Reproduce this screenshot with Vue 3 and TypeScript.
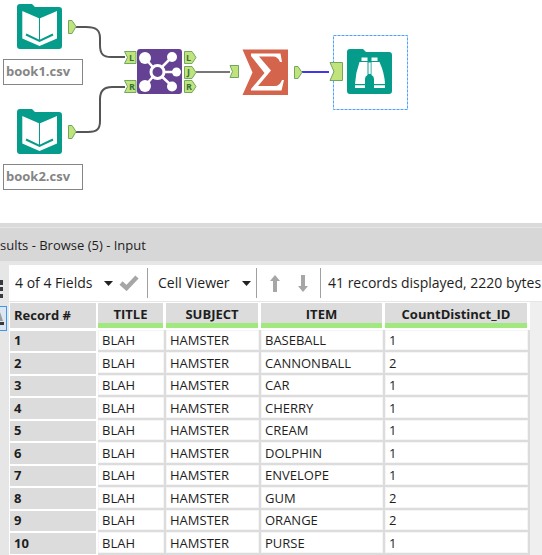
<script setup lang="ts">
import { ref } from 'vue'

interface Row {
  title: string
  subject: string
  item: string
  count: number
}

const columns: string[] = ['TITLE', 'SUBJECT', 'ITEM', 'CountDistinct_ID']

const items: [string, number][] = [
  ['BASEBALL', 1],
  ['CANNONBALL', 2],
  ['CAR', 1],
  ['CHERRY', 1],
  ['CREAM', 1],
  ['DOLPHIN', 1],
  ['ENVELOPE', 1],
  ['GUM', 2],
  ['ORANGE', 2],
  ['PURSE', 1],
]

const rows: Row[] = items.map(([item, count]) => ({
  title: 'BLAH',
  subject: 'HAMSTER',
  item,
  count,
}))

const sources = [
  { id: 'source-a', file: 'book1.csv' },
  { id: 'source-b', file: 'book2.csv' },
]

const fields = ref('4 of 4 Fields')
const viewer = ref('Cell Viewer')
</script>

<template>
  <main class="app">
    <section class="canvas" aria-label="Workflow">
      <svg class="wires" width="542" height="223" aria-hidden="true">
        <path d="M76 27H86C96 27 100 30 100 38V45C100 54 103 57 111 57H125" />
        <path d="M76 132H88C97 132 100 129 100 121V99C100 91 104 87 112 87H125" />
        <path class="joined" d="M196 72H230" />
        <path class="active" d="M302 72H329" />
      </svg>

      <div v-for="s in sources" :key="s.id" class="node source" :class="s.id">
        <svg class="source-icon" width="60" height="46" viewBox="0 0 60 46" aria-hidden="true">
          <path class="teal" d="M3 0H15L18 3H42Q45 3 45 6V42Q45 45 42 45H3Q0 45 0 42V3Q0 0 3 0Z" />
          <path fill="#fff" d="M5.300 7L22.500 14.500L40 7V34.500L22.500 42L5.300 34.500Z" />
          <path class="crease" d="M22.500 14V37" />
          <path class="fold" d="M9 30.500L22.500 37L36 30.500" />
          <path class="anchor" d="M51.500 16.500H55L59 22.500L55 29.500H51.500Z" />
        </svg>
        <div class="file">{{ s.file }}</div>
      </div>

      <svg class="node join" width="74" height="46" viewBox="0 0 74 46" role="img" aria-label="Join">
        <rect x="14" y="0" width="45" height="45" rx="3" fill="#654193" />
        <g stroke="#fff" stroke-width="2.500">
          <path d="M22 9L34 23M22 37L34 23M49 8L34 23M54 23H34M49 37L34 23" />
        </g>
        <g fill="#fff">
          <circle cx="22" cy="9" r="6" />
          <circle cx="22" cy="37" r="6" />
          <circle cx="49" cy="8" r="5" />
          <circle cx="53.500" cy="23" r="4.500" />
          <circle cx="49" cy="37.500" r="5" />
        </g>
        <circle cx="34.500" cy="23" r="6.500" fill="#654193" stroke="#fff" stroke-width="3" />
        <path class="anchor" d="M1.500 2.500H13V14.500H1.500L4.500 8.500Z" />
        <path class="anchor" d="M1.500 31.500H13V43.500H1.500L4.500 37.500Z" />
        <path class="anchor" d="M61.500 2.500H69L73 8.500L69 14.500H61.500Z" />
        <path class="anchor" d="M61.500 17.500H69L73 23.500L69 29.500H61.500Z" />
        <path class="anchor" d="M61.500 31.500H69L73 37.500L69 43.500H61.500Z" />
        <g class="letters">
          <text x="6" y="12">L</text>
          <text x="6" y="41">R</text>
          <text x="63" y="12">L</text>
          <text x="64" y="26">J</text>
          <text x="63" y="41">R</text>
        </g>
      </svg>

      <svg class="node sum" width="74" height="48" viewBox="0 0 74 48" role="img" aria-label="Summarize">
        <path d="M13.500 1.500H59V47H13.500L23.500 24.500Z" fill="#d4644b" />
        <path
          fill="#fff"
          d="M22 5.500H51.500L53 14H51Q49 8.500 44 8.500H30L42 22.500L29 38H46Q50.500 38 53 32H55L52.500 42.500H22V41L35.500 25L22 8Z"
        />
        <path class="anchor" d="M1 17.500H9.500V29.500H1L3.500 23.500Z" />
        <path class="anchor" d="M65.500 18.500H69L73 24.500L69 30.500H65.500Z" />
      </svg>

      <svg class="node selection" width="76" height="76" aria-hidden="true">
        <rect x="0.500" y="0.500" width="74" height="74" />
      </svg>
      <svg class="node browse" width="64" height="46" viewBox="0 0 64 46" role="img" aria-label="Browse">
        <path class="teal" d="M21 0H34L37 3H60Q63 3 63 6V42Q63 45 60 45H21Q18 45 18 42V3Q18 0 21 0Z" />
        <g fill="#fff">
          <path d="M32.500 8.500H38.500V12H32.500ZM42.500 8.500H48.500V12H42.500Z" />
          <path d="M30.500 13H38.500V26Q36 27 36 30V35H26Q26.500 24 30.500 13Z" />
          <path d="M42.500 13H50.500Q55.500 24 56 35H45V30Q45 27 42.500 26Z" />
          <path d="M39.500 13.500H41.700V25H39.500Z" />
          <path d="M26 36.300H36V39H26ZM45 36.300H56V39H45Z" />
        </g>
        <path class="anchor" d="M1 13.500H13.500V31.500H1L5 22.500Z" />
      </svg>
    </section>

    <section class="results">
      <h1 class="title">sults - Browse (5) - Input</h1>
      <div class="content">
        <aside class="gutter">
          <svg class="list" width="3" height="21" aria-hidden="true">
            <path d="M0 1H3V6H0ZM0 8H3V12H0ZM0 15H3V19H0Z" fill="#36393d" />
          </svg>
          <button class="tab" type="button" aria-label="Messages">
            <svg width="4" height="14" viewBox="0 0 4 14">
              <path d="M0 0L3 9H0Z" fill="#9b9b9b" />
              <path d="M0 10H4V13H0Z" fill="#36393d" />
            </svg>
          </button>
        </aside>
        <div class="sheet">
          <div class="toolbar">
            <label class="pick fields">
              <select v-model="fields" aria-label="Fields">
                <option>4 of 4 Fields</option>
              </select>
              <svg width="9" height="5" aria-hidden="true"><path d="M0 0H9L4.500 5Z" fill="#222" /></svg>
            </label>
            <button class="tool check" type="button" aria-label="Apply">
              <svg width="20" height="16" viewBox="0 0 20 16">
                <path d="M2 8L7.500 13L18 2" fill="none" stroke="#a6a6a6" stroke-width="4.500" />
              </svg>
            </button>
            <label class="pick viewer">
              <select v-model="viewer" aria-label="Viewer">
                <option>Cell Viewer</option>
              </select>
              <svg width="9" height="5" aria-hidden="true"><path d="M0 0H9L4.500 5Z" fill="#222" /></svg>
            </label>
            <div class="arrows">
              <button class="tool" type="button" aria-label="Previous">
                <svg width="10" height="17" viewBox="0 0 10 17">
                  <path d="M5 0L10 6H7V17H3V6H0Z" fill="#a6a6a6" />
                </svg>
              </button>
              <button class="tool" type="button" aria-label="Next">
                <svg width="10" height="17" viewBox="0 0 10 17">
                  <path d="M5 17L10 11H7V0H3V11H0Z" fill="#a6a6a6" />
                </svg>
              </button>
            </div>
            <p class="status">41 records displayed, 2220 bytes</p>
          </div>

          <table>
            <colgroup>
              <col class="c-record" />
              <col class="c-title" />
              <col class="c-subject" />
              <col class="c-item" />
              <col class="c-count" />
            </colgroup>
            <thead>
              <tr>
                <th scope="col" class="record">Record #</th>
                <th v-for="c in columns" :key="c" scope="col" class="field"><span>{{ c }}</span></th>
              </tr>
            </thead>
            <tbody>
              <tr v-for="(r, i) in rows" :key="i">
                <th scope="row">{{ i + 1 }}</th>
                <td>{{ r.title }}</td>
                <td>{{ r.subject }}</td>
                <td>{{ r.item }}</td>
                <td>{{ r.count }}</td>
              </tr>
            </tbody>
          </table>
        </div>
      </div>
    </section>
  </main>
</template>

<style>
body {
  margin: 0;
  background: #fff;
}
</style>

<style scoped>
.app {
  height: 100vh;
  display: flex;
  flex-direction: column;
  overflow: hidden;
  font: 13px/18px "Open Sans", "Noto Sans", sans-serif;
  color: #1e1e1e;
}

/* workflow canvas */
.canvas {
  position: relative;
  flex: none;
  height: 223px;
  overflow: hidden;
}
.wires {
  position: absolute;
  left: 0;
  top: 0;
  fill: none;
  stroke: #555;
  stroke-width: 2;
}
.joined {
  stroke: #777;
}
.active {
  stroke: #4338e8;
}
.node {
  position: absolute;
}
.source {
  left: 3px;
}
.source-a {
  top: 4px;
}
.source-b {
  top: 109px;
}
.source-icon {
  display: block;
  margin-left: 14px;
}
.file {
  box-sizing: border-box;
  width: 80px;
  height: 26px;
  margin-top: 9px;
  padding-left: 2px;
  border: 1px solid #858585;
  color: #858585;
  font-weight: 700;
  line-height: 22px;
}
.join {
  left: 123px;
  top: 49px;
}
.sum {
  left: 229px;
  top: 48px;
}
.browse {
  left: 329px;
  top: 49px;
}
.selection {
  left: 333px;
  top: 35px;
  fill: none;
  stroke: #4da3ff;
  stroke-dasharray: 3 1;
}
.teal {
  fill: #069c8c;
}
.crease {
  stroke: #069c8c;
  stroke-width: 1;
}
.fold {
  fill: none;
  stroke: #069c8c;
  stroke-width: 2;
}
.anchor {
  fill: #c2e37c;
  stroke: #6fa860;
  stroke-width: 1;
}
.letters {
  fill: #35703c;
  font: 700 9px "Open Sans", sans-serif;
}

/* results panel */
.results {
  flex: 1;
  display: flex;
  flex-direction: column;
  border-top: 4px solid #dadada;
  background: #e6e6e6;
}
.title {
  margin: 1px 0 4px;
  height: 33px;
  background: #d7d7d7;
  font-size: 13px;
  font-weight: 400;
  line-height: 34px;
  white-space: nowrap;
}
.content {
  flex: 1;
  display: flex;
}
.gutter {
  flex: none;
  width: 9px;
  padding-top: 14px;
  box-sizing: border-box;
}
.list {
  display: block;
}
.tab {
  display: flex;
  align-items: center;
  box-sizing: border-box;
  width: 7px;
  height: 25px;
  margin-top: 6px;
  padding: 0;
  border: 1px solid #3b97ef;
  border-left: 0;
  background: #dbe6f1;
}
.sheet {
  flex: 1;
  min-width: 0;
  background: #efefef;
}
.toolbar {
  display: flex;
  align-items: center;
  height: 36px;
  padding-left: 6px;
  border-bottom: 1px solid #e6e6e6;
  background: #fff;
  font-size: 14px;
  white-space: nowrap;
}
.pick {
  display: flex;
  align-items: center;
  justify-content: space-between;
}
.fields {
  width: 98px;
}
.viewer {
  width: 93px;
  padding: 0 5px 0 10px;
}
select {
  appearance: none;
  margin: 0;
  padding: 0;
  border: 0;
  background: none;
  color: inherit;
  font: inherit;
}
.tool {
  display: flex;
  padding: 0;
  border: 0;
  background: none;
}
.check {
  margin: 0 8px 0 6px;
}
.arrows {
  display: flex;
  align-items: center;
  justify-content: center;
  gap: 18px;
  width: 63px;
}
.viewer,
.arrows,
.status {
  height: 30px;
  border-left: 1px solid #a0a0a0;
}
.status {
  margin: 0;
  padding-left: 7px;
  line-height: 30px;
}

table {
  table-layout: fixed;
  width: 521px;
  border-spacing: 0;
}
.c-record {
  width: 89px;
}
.c-title {
  width: 68px;
}
.c-subject {
  width: 95px;
}
.c-item {
  width: 124px;
}
.c-count {
  width: 145px;
}
th,
td {
  box-sizing: border-box;
  padding: 0 0 0 4px;
  overflow: hidden;
  text-align: left;
  line-height: 18px;
  white-space: nowrap;
}
th {
  padding-bottom: 2px;
  background: #dcdcdc;
  border: 1px solid #fff;
  border-right-width: 2px;
}
thead th {
  height: 28px;
  border-bottom-width: 2px;
}
thead .field {
  padding: 0;
  border-left: 0;
  border-right-width: 3px;
  text-align: center;
  vertical-align: bottom;
}
.field span {
  display: block;
  border-bottom: 5px solid #a1e87e;
}
tbody th,
tbody td {
  height: 22px;
}
tbody tr:nth-child(even) > * {
  height: 23px;
}
td {
  background: #fff;
  border: solid #dcdcdc;
  border-width: 0 2px 2px 0;
  box-shadow: inset 0 0 0 1px #f5f5f5;
}
</style>
